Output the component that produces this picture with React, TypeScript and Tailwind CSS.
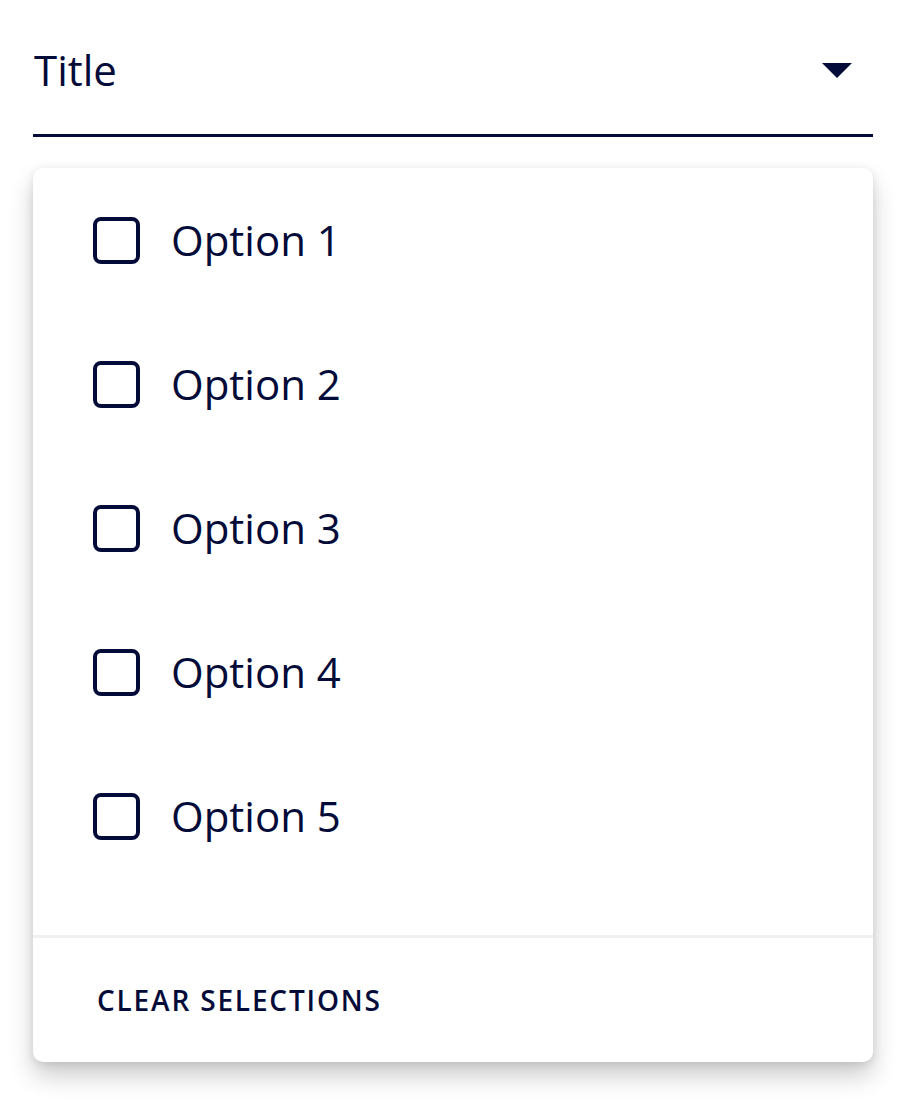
import React from "react";

const options = ["Option 1", "Option 2", "Option 3", "Option 4", "Option 5"];

export default function App() {
  return (
    <div
      className="w-[900px] h-[1102px] bg-white text-[#030b38]"
      style={{ fontFamily: '"Open Sans", "Noto Sans", sans-serif' }}
    >
      <div className="pl-[33px] pr-[27px] pt-[38px]">
        <div className="flex items-center justify-between h-[64px] pr-[21px] pl-px">
          <span className="text-[42px] leading-none">Title</span>
          <svg width="30" height="15" viewBox="0 0 30 15">
            <polygon points="0,0 30,0 15,15" fill="#030b38" />
          </svg>
        </div>
        <div className="mt-[32px] h-[3px] bg-[#030b38]" />
        <div className="mt-[31px] rounded-[10px] bg-white shadow-[0_14px_24px_rgba(0,0,0,0.2),0_2px_8px_rgba(0,0,0,0.1)] overflow-hidden">
          <div className="pb-[47px]">
            {options.map((o) => (
              <div key={o} className="h-[144px] flex items-center pl-[60px]">
                <div className="w-[47px] h-[47px] rounded-[8px] border-[4px] border-[#030b38]" />
                <span className="ml-[31px] text-[42px] leading-none">{o}</span>
              </div>
            ))}
          </div>
          <div className="border-t-[3px] border-[#f0f0f0] h-[127px] flex items-center pl-[64px]">
            <span className="text-[28px] font-semibold tracking-[0.065em] leading-none">
              CLEAR SELECTIONS
            </span>
          </div>
        </div>
      </div>
    </div>
  );
}
